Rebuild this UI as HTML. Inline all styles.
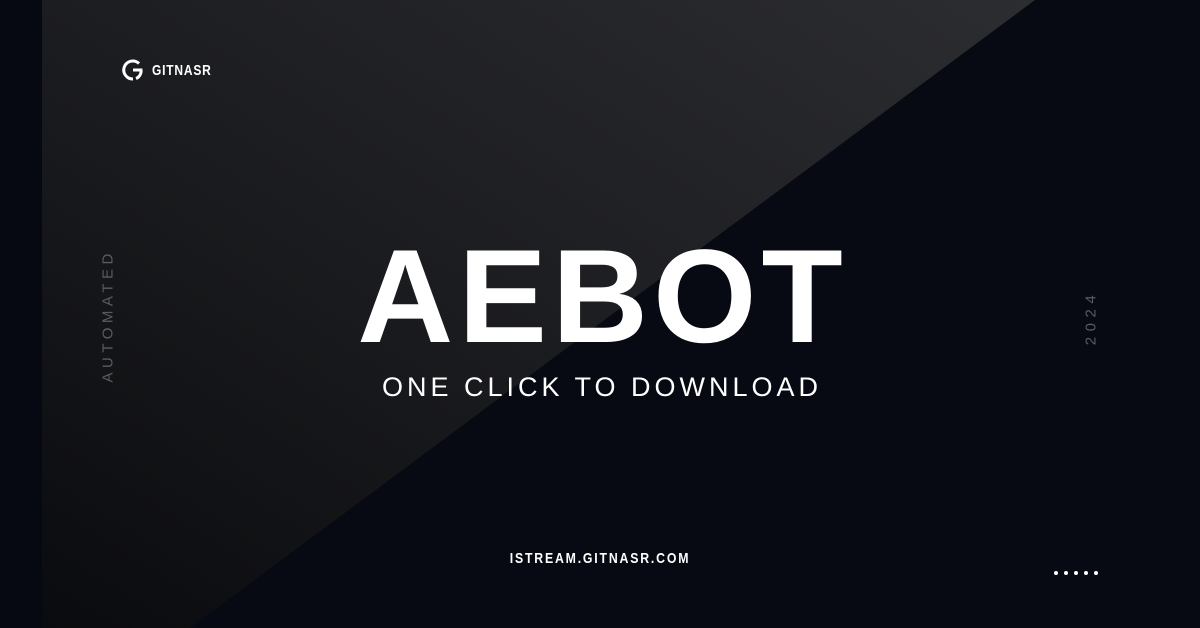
<!DOCTYPE html>
<html><head><meta charset="utf-8"><style>
html,body{margin:0;padding:0}
body{width:1200px;height:628px;position:relative;overflow:hidden;background:#070a12;font-family:"Liberation Sans",sans-serif}
.tri{position:absolute;left:0;top:0}
.logo{position:absolute;left:121px;top:58px;display:flex;align-items:center;color:#fff}
.logo span{display:block;font-size:15px;font-weight:bold;letter-spacing:1px;margin-left:7px;transform:scaleX(.8);transform-origin:left}
.title{position:absolute;left:0;width:1200px;top:222px;text-align:center;color:#fff;font-weight:bold;font-size:133px;letter-spacing:5px;line-height:150px;text-indent:5px}
.sub{position:absolute;left:0;width:1200px;top:370px;text-align:center;color:#fff;font-size:27px;letter-spacing:4px;line-height:34px;text-indent:4px}
.url{position:absolute;left:0;width:1200px;top:550px;text-align:center;color:#fff;font-size:15px;font-weight:bold;letter-spacing:2.2px;transform:scaleX(.82)}
.vl{position:absolute;color:#5a5c62;font-size:15px;letter-spacing:4.5px;transform:rotate(-90deg);transform-origin:center;white-space:nowrap}
.dots{position:absolute;left:1054px;top:571px;display:flex;gap:6px}
.dots i{width:4px;height:4px;border-radius:50%;background:#fff;display:block}
</style></head><body>
<svg class="tri" width="1200" height="628">
<defs><linearGradient id="g" x1="1" y1="0" x2="0" y2="1"><stop offset="0" stop-color="#2c2d31"/><stop offset="0.5" stop-color="#1c1d20"/><stop offset="1" stop-color="#0a0b0e"/></linearGradient></defs>
<rect x="0" y="0" width="42" height="628" fill="#060911"/>
<polygon points="42,0 1035,0 190,628 42,628" fill="url(#g)"/>
</svg>
<div class="logo"><svg width="24" height="24" viewBox="0 0 24 24"><path d="M18 5.5A9 9 0 1 0 12 21" fill="none" stroke="#fff" stroke-width="3"/><path d="M12 12h8a8 8 0 0 1-5 8.5" fill="none" stroke="#fff" stroke-width="3"/></svg><span>GITNASR</span></div>
<div class="title">AEBOT</div>
<div class="sub">ONE CLICK TO DOWNLOAD</div>
<div class="url">ISTREAM.GITNASR.COM</div>
<div class="vl" style="left:48px;top:314px;width:120px;text-align:center">AUTOMATED</div>
<div class="vl" style="left:1051px;top:309px;width:80px;text-align:center;letter-spacing:5.5px">2024</div>
<div class="dots"><i></i><i></i><i></i><i></i><i></i></div>
</body></html>
